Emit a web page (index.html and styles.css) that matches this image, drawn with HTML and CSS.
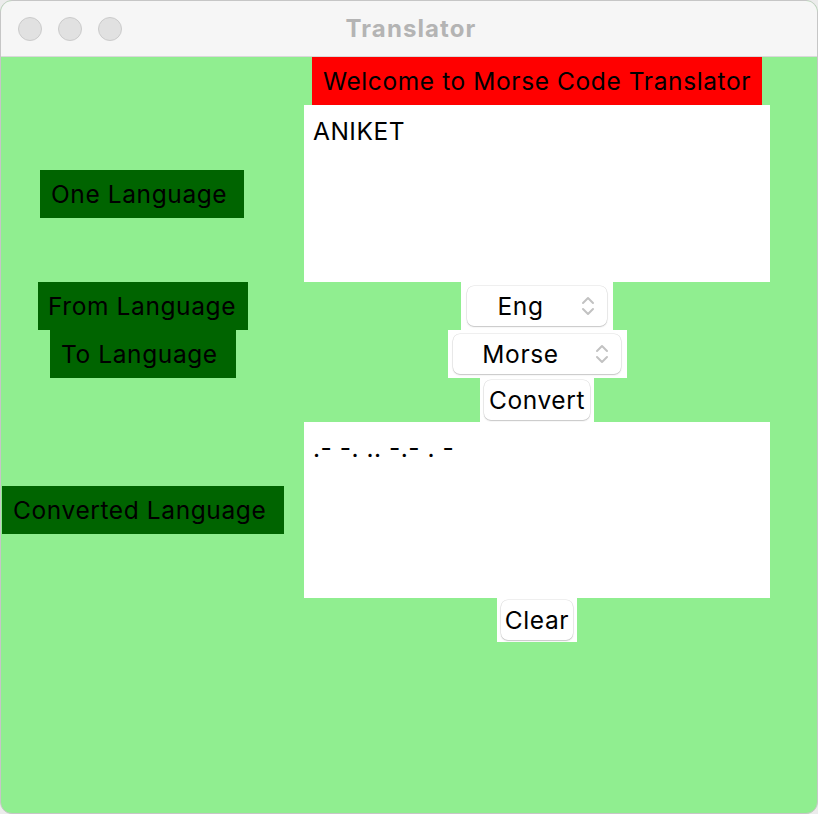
FILE: index.html
```html
<!DOCTYPE html>
<html>
<head>
<meta charset="utf-8">
<title>Translator</title>
<link rel="stylesheet" href="styles.css">
</head>
<body>
<div class="window">
  <div class="titlebar">
    <div class="lights">
      <span class="light"></span>
      <span class="light"></span>
      <span class="light"></span>
    </div>
    <div class="title">Translator</div>
    <div></div>
  </div>
  <div class="content">
    <div class="left">
      <div class="lbl lbl-one">One Language</div>
      <div class="lbl lbl-from">From Language</div>
      <div class="lbl lbl-to">To Language</div>
      <div class="lbl lbl-conv">Converted Language</div>
    </div>
    <div class="right">
      <div class="heading">Welcome to Morse Code Translator</div>
      <div class="textbox tb-in">ANIKET</div>
      <div class="tkwrap w-eng">
        <div class="popup p-eng"><span class="ptext">Eng</span>
          <svg class="chev" width="16" height="24" viewBox="0 0 16 24"><path d="M3 9 L8 4 L13 9 M3 15 L8 20 L13 15" fill="none" stroke="#c2c2c2" stroke-width="2" stroke-linecap="round" stroke-linejoin="round"/></svg>
        </div>
      </div>
      <div class="tkwrap w-morse">
        <div class="popup p-morse"><span class="ptext">Morse</span>
          <svg class="chev" width="16" height="24" viewBox="0 0 16 24"><path d="M3 9 L8 4 L13 9 M3 15 L8 20 L13 15" fill="none" stroke="#c2c2c2" stroke-width="2" stroke-linecap="round" stroke-linejoin="round"/></svg>
        </div>
      </div>
      <div class="tkwrap w-convert">
        <div class="btn b-convert">Convert</div>
      </div>
      <div class="textbox tb-out">.- -. .. -.- . -</div>
      <div class="tkwrap w-clear">
        <div class="btn b-clear">Clear</div>
      </div>
    </div>
  </div>
</div>
</body>
</html>
```

FILE: styles.css
```css
* { box-sizing: border-box; }
html, body { margin: 0; padding: 0; background: #ececec; }
body { font-family: "Inter", "Liberation Sans", sans-serif; color: #000; }

.window {
  width: 818px;
  height: 814px;
  border: 1px solid #c6c6c6;
  border-radius: 12px;
  overflow: hidden;
  display: flex;
  flex-direction: column;
  background: #90ee90;
}

.titlebar {
  height: 56px;
  flex: 0 0 56px;
  background: #f6f6f6;
  border-bottom: 1px solid #d9d9d9;
  display: grid;
  grid-template-columns: 1fr auto 1fr;
  align-items: center;
}
.lights { display: flex; gap: 16px; padding-left: 17px; }
.light {
  width: 24px; height: 24px; border-radius: 50%;
  background: #e1e1e1;
  border: 1px solid #cbcbcb;
}
.title {
  font-weight: 700;
  font-size: 24px;
  letter-spacing: 1.1px;
  color: #b4b4b4;
  padding-left: 4px;
}

.content {
  flex: 1;
  display: grid;
  grid-template-columns: 303px 466px;
  align-items: start;
}

.left { display: flex; flex-direction: column; align-items: flex-start; }
.lbl {
  background: #006400;
  height: 48px;
  display: flex;
  align-items: center;
  padding-left: 11px;
  font-size: 24.5px;
  letter-spacing: 0.6px;
  white-space: nowrap;
}
.lbl-one { margin-top: 113px; margin-left: 39px; width: 204px; }
.lbl-from { margin-top: 64px; margin-left: 37px; width: 210px; padding-left: 10px; }
.lbl-to { margin-left: 49px; width: 186px; }
.lbl-conv { margin-top: 108px; margin-left: 1px; width: 282px; }

.right { display: flex; flex-direction: column; align-items: center; }
.heading {
  width: 450px;
  height: 48px;
  background: #ff0000;
  display: flex;
  align-items: center;
  justify-content: center;
  font-size: 24.5px;
  letter-spacing: 0.6px;
  white-space: nowrap;
}
.textbox {
  width: 466px;
  background: #fff;
  font-size: 24.5px;
  letter-spacing: 0.5px;
  line-height: 30px;
  padding: 11px 9px;
  white-space: pre;
}
.tb-in { height: 177px; }
.tb-out { height: 176px; }

.tkwrap {
  background: #fff;
  display: flex;
  align-items: center;
  justify-content: center;
}
.w-eng { width: 152px; height: 48px; }
.w-morse { width: 179px; height: 48px; }
.w-convert { width: 114px; height: 44px; }
.w-clear { width: 80px; height: 44px; }

.popup, .btn {
  height: 40px;
  background: #fff;
  border-radius: 7px;
  box-shadow: 0 0 0 0.5px rgba(0,0,0,0.12), 0 1px 1.5px rgba(0,0,0,0.18);
  font-size: 24.5px;
  letter-spacing: 0.6px;
  display: flex;
  align-items: center;
}
.popup { padding-right: 11px; }
.p-eng { width: 140px; }
.p-morse { width: 168px; }
.ptext { flex: 1; text-align: center; padding-right: 6px; }
.chev { flex: 0 0 auto; }
.btn { justify-content: center; }
.b-convert { width: 106px; }
.b-clear { width: 72px; }
```
